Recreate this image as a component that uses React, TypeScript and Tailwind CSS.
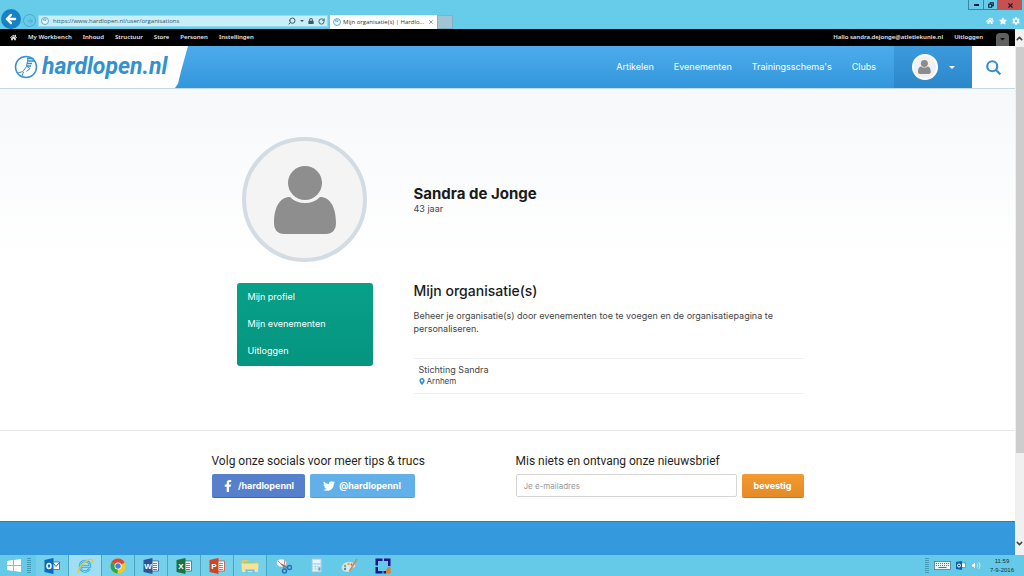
import React from 'react';
import { FaHome, FaStar, FaCog, FaLock, FaFacebookF, FaTwitter, FaMapMarkerAlt } from 'react-icons/fa';
import { ArrowLeft, ArrowRight, ChevronDown, ChevronUp, RotateCw, Search, X } from 'lucide-react';

const adminLinks = ['My Workbench', 'Inhoud', 'Structuur', 'Store', 'Personen', 'Instellingen'];
const navLinks = ['Artikelen', 'Evenementen', "Trainingsschema's", 'Clubs'];
const profileLinks = ['Mijn profiel', 'Mijn evenementen', 'Uitloggen'];

const PageIcon = () => (
  <svg viewBox="0 0 16 16" className="size-2 shrink-0" fill="none" stroke="#3b93c9" strokeWidth="1.5">
    <circle cx="8" cy="8" r="7" fill="#eaf7fd" />
    <path d="M8 2v6l3-3M5 4v3" />
  </svg>
);

const PersonIcon = ({ className }: { className: string }) => (
  <svg viewBox="0 0 62 68" className={className} fill="currentColor">
    <circle cx="31" cy="17" r="17" />
    <path d="M16 31c4 4 9 6 15 6s11-2 15-6c10 0 16 10 16 26 0 7-4 11-10 11H10C4 68 0 64 0 57c0-16 6-26 16-26Z" />
  </svg>
);

const BrowserBar = () => (
  <div className="flex h-[29px] shrink-0 items-stretch justify-between bg-[#67cbea] font-['Open_Sans',sans-serif] text-[6px]">
    <div className="flex flex-1 items-end">
      <button aria-label="Terug" className="ml-px flex size-5 items-center justify-center self-end rounded-full bg-[#1583c3] text-white">
        <ArrowLeft className="size-[14px]" strokeWidth={4} />
      </button>
      <button aria-label="Vooruit" className="mb-[2px] ml-[2px] flex size-[13px] items-center justify-center rounded-full border border-[#49a9cf] text-[#4bacd2]">
        <ArrowRight className="size-2" strokeWidth={3} />
      </button>
      <div className="mb-[2px] ml-[2px] flex h-3 w-[290px] items-center gap-1 border border-[#8fdcf2] bg-[#c9eef8] px-[2px] text-[#3c5a66]">
        <PageIcon />
        <input
          aria-label="Adres"
          defaultValue="https://www.hardlopen.nl/user/organisations"
          className="h-full min-w-0 flex-1 bg-transparent text-[#355764] outline-none"
        />
        <Search className="size-2 -scale-x-100" strokeWidth={3} />
        <svg viewBox="0 0 8 4" className="w-1" fill="currentColor"><path d="M0 0h8L4 4z" /></svg>
        <FaLock className="size-[6px]" />
        <RotateCw className="size-[7px]" strokeWidth={3} />
      </div>
      <div className="ml-[2px] flex h-[14px] w-[107px] items-center gap-[2px] bg-white px-[3px] text-[#333]">
        <PageIcon />
        <span className="flex-1 whitespace-nowrap">Mijn organisatie(s) | Hardlo...</span>
        <button aria-label="Tabblad sluiten"><X className="size-[6px] text-[#777]" strokeWidth={3} /></button>
      </div>
      <button aria-label="Nieuw tabblad" className="h-[14px] w-4 border border-[#7fb3c8] bg-[#9fc5d5]" />
    </div>
    <div className="flex flex-col items-end justify-between">
      <div className="mr-[2px] flex h-[10px] text-[#123]">
        <button aria-label="Minimaliseren" className="flex w-4 items-center justify-center border border-t-0 border-[#3b86a1]">
          <span className="h-[2px] w-[5px] bg-current" />
        </button>
        <button aria-label="Herstellen" className="flex w-[14px] items-center justify-center border border-t-0 border-l-0 border-[#3b86a1]">
          <svg viewBox="0 0 8 8" className="size-[6px]" fill="none" stroke="currentColor" strokeWidth="1.5"><path d="M1 3h4v4H1zM3 3V1h4v4H5" /></svg>
        </button>
        <button aria-label="Sluiten" className="flex w-6 items-center justify-center bg-[#c75050]"><X className="size-[7px]" strokeWidth={4} /></button>
      </div>
      <div className="mr-1 mb-1 flex gap-[5px] text-[#eef9fc]">
        <button aria-label="Startpagina"><FaHome className="size-2" /></button>
        <button aria-label="Favorieten"><FaStar className="size-2" /></button>
        <button aria-label="Extra"><FaCog className="size-2" /></button>
      </div>
    </div>
  </div>
);

const AdminBar = () => (
  <div className="flex h-[17px] shrink-0 items-center justify-between bg-black font-['Noto_Sans',sans-serif] text-[6px] font-semibold text-[#e6e6e6]">
    <div className="flex items-center gap-[11px] pl-[10px]">
      <a href="#" aria-label="Home"><FaHome className="size-[7px]" /></a>
      {adminLinks.map((link) => <a key={link} href="#">{link}</a>)}
    </div>
    <div className="flex h-full items-center gap-[11px] pr-[6px]">
      <a href="#">Hallo sandra.dejonge@atletiekunie.nl</a>
      <a href="#">Uitloggen</a>
      <button aria-label="Snelkoppelingen" className="ml-[2px] flex h-[13px] w-[13px] items-center justify-center self-end rounded-t bg-[#606060]">
        <svg viewBox="0 0 8 4" className="w-[5px]" fill="#111"><path d="M0 0h8L4 4z" /></svg>
      </button>
    </div>
  </div>
);

const SiteHeader = () => (
  <header className="flex h-[43px] shrink-0 items-stretch justify-between border-b border-[#c3d9e8] bg-gradient-to-b from-[#4dabec] to-[#3197db] text-[9px] text-white">
    <a href="#" className="flex w-[188px] items-center gap-1 bg-white pl-[14px] text-[#3391cf] [clip-path:polygon(0_0,100%_0,181px_60%,178px_90%,175px_100%,0_100%)]">
      <svg viewBox="0 0 48 48" className="size-6 shrink-0" fill="none" stroke="currentColor">
        <circle cx="24" cy="24" r="21" strokeWidth="3" />
        <path d="M26 7h13M27 12h14M26 17h10M24 22h10" strokeWidth="3" />
        <path d="M28 8l-3 14 7 5-7 6M25 23l-7 10-10 3M19 34l-3 8" strokeWidth="2" />
      </svg>
      <span className="font-[Roboto,sans-serif] text-[23px] font-bold italic">hardlopen.nl</span>
    </a>
    <div className="flex items-stretch">
      <nav className="flex items-center gap-5 pr-[18px]">
        {navLinks.map((link) => <a key={link} href="#">{link}</a>)}
      </nav>
      <button aria-label="Mijn account" className="flex w-[78px] items-center justify-center gap-[11px] bg-gradient-to-b from-[#3c9bdd] to-[#2b87c9]">
        <span className="flex size-[26px] items-center justify-center rounded-full border-2 border-white bg-[#f1f1f1] text-[#8c8c8c]">
          <PersonIcon className="h-[14px]" />
        </span>
        <svg viewBox="0 0 8 4" className="w-[6px]" fill="white"><path d="M0 0h8L4 4z" /></svg>
      </button>
      <button aria-label="Zoeken" className="flex w-[43px] items-center justify-center bg-white text-[#3a8fc9]">
        <svg viewBox="0 0 24 24" className="size-[15px]" fill="none" stroke="currentColor" strokeWidth="3.5">
          <circle cx="10" cy="10" r="8" />
          <path d="M15 15l8 8" />
        </svg>
      </button>
    </div>
  </header>
);

const Profile = () => (
  <main className="shrink-0 border-b border-[#e6e6e6] bg-gradient-to-b from-[#f6f8fa] via-white to-white pt-12 pb-9">
    <div className="mx-auto grid max-w-[592px] grid-cols-[202px_1fr] gap-y-[21px]">
      <div className="ml-[25px] flex w-[136px] justify-center">
        <div className="flex size-[125px] items-center justify-center rounded-full border-4 border-[#d3dce3] bg-[#f4f4f4] text-[#8e8e8e]">
          <PersonIcon className="h-[68px]" />
        </div>
      </div>
      <div className="flex flex-col justify-center pt-[2px]">
        <h1 className="text-[15px] leading-4 font-bold text-[#1a1a1a]">Sandra de Jonge</h1>
        <p className="text-[9px] leading-[13px] text-[#444]">43 jaar</p>
      </div>

      <nav className="ml-[25px] flex w-[136px] flex-col self-start rounded-[3px] bg-gradient-to-b from-[#08a088] to-[#059580] pb-[2px] text-[9px] text-white">
        {profileLinks.map((link) => (
          <a key={link} href="#" className="px-[11px] leading-[27px]">{link}</a>
        ))}
      </nav>
      <section className="text-[9px] leading-[13px] text-[#444]">
        <h2 className="text-[14px] leading-4 font-medium text-[#1a1a1a]">Mijn organisatie(s)</h2>
        <p className="mt-[10px]">
          Beheer je organisatie(s) door evenementen toe te voegen en de organisatiepagina te personaliseren.
        </p>
        <div className="mt-[23px] border-y border-[#f1f1f1] px-[5px] pt-1 pb-[6px]">
          <a href="#" className="block">Stichting Sandra</a>
          <p className="flex items-center gap-[2px] text-[8px] leading-[11px]">
            <FaMapMarkerAlt className="h-[7px] w-[6px] text-[#2f8fd0]" />
            Arnhem
          </p>
        </div>
      </section>
    </div>
  </main>
);

const Footer = () => (
  <footer className="flex flex-1 flex-col bg-gradient-to-b from-[#3b9fe3] to-[#3498dd]">
    <div className="border-b border-[#2f7db5] bg-white pt-[22px] pb-[23px]">
      <div className="mx-auto grid max-w-[592px] grid-cols-2 gap-4">
        <section>
          <h3 className="font-[Roboto,sans-serif] text-[12px] leading-4 text-[#1f1f1f]">Volg onze socials voor meer tips &amp; trucs</h3>
          <div className="mt-[5px] flex gap-[5px] text-[9px] font-bold text-white">
            <a href="#" className="flex h-6 w-[93px] items-center justify-center gap-1 rounded-[2px] border-b border-[#4565aa] bg-[#5680cb]">
              <FaFacebookF className="size-3" />/hardlopennl
            </a>
            <a href="#" className="flex h-6 w-[105px] items-center justify-center gap-1 rounded-[2px] border-b border-[#559dd2] bg-[#62b0ea]">
              <FaTwitter className="size-3" />@hardlopennl
            </a>
          </div>
        </section>
        <form onSubmit={(e) => e.preventDefault()}>
          <label htmlFor="email" className="block font-[Roboto,sans-serif] text-[12px] leading-4 text-[#1f1f1f]">
            Mis niets en ontvang onze nieuwsbrief
          </label>
          <div className="mt-[5px] flex gap-[5px] text-[9px]">
            <input
              id="email"
              type="email"
              placeholder="Je e-mailadres"
              className="h-[23px] min-w-0 flex-1 rounded-[2px] border border-[#d5d5d5] bg-white px-[7px] text-[8px] outline-none placeholder:text-[#999]"
            />
            <button type="submit" className="h-6 w-[62px] rounded-[2px] border-b border-[#c97a20] bg-gradient-to-b from-[#f39a30] to-[#e58a27] font-bold text-white">
              bevestig
            </button>
          </div>
        </form>
      </div>
    </div>
  </footer>
);

const OfficeIcon = ({ letter, color }: { letter: string; color: string }) => (
  <svg viewBox="0 0 32 32" className="size-4">
    <rect x="15" y="6" width="16" height="20" fill="#fff" stroke={color} strokeWidth="1.5" />
    <path d="M20 11h8M20 15h8M20 19h8M20 23h8" stroke={color} strokeWidth="1.5" />
    <path d="M1 4l18-4v32L1 28z" fill={color} />
    <text x="10" y="22" textAnchor="middle" fontFamily="Liberation Sans, sans-serif" fontSize="16" fontWeight="bold" fill="#fff">{letter}</text>
  </svg>
);

const apps = [
  {
    name: 'Outlook',
    open: true,
    icon: (
      <svg viewBox="0 0 32 32" className="size-4">
        <path d="M17 8h14v15H17z" fill="#fff" stroke="#0a6cb8" strokeWidth="1.5" />
        <path d="M18 10l6 7 6-7" fill="none" stroke="#0a6cb8" strokeWidth="2" />
        <path d="M1 4l18-4v32L1 28z" fill="#0a6cb8" />
        <ellipse cx="10" cy="16" rx="4" ry="5" fill="none" stroke="#fff" strokeWidth="3" />
      </svg>
    ),
  },
  {
    name: 'Internet Explorer',
    open: true,
    active: true,
    icon: (
      <svg viewBox="0 0 32 32" className="size-4" fill="none">
        <path d="M25 21c-2 4-5 6-9 6-6 0-10-5-10-11S10 6 16 6s10 4 10 11H9" stroke="#35a7dc" strokeWidth="5" />
        <path d="M25 21c-2 4-5 6-9 6-6 0-10-5-10-11S10 6 16 6s10 4 10 11H9" stroke="#a3e3f8" strokeWidth="1.5" />
        <path d="M4 29C-3 24 20 0 29 3c3 1 2 5 0 8" stroke="#e9c33d" strokeWidth="2.5" />
      </svg>
    ),
  },
  {
    name: 'Chrome',
    open: true,
    icon: (
      <svg viewBox="0 0 32 32" className="size-4">
        <circle cx="16" cy="16" r="15" fill="#fbc914" />
        <path d="M16 16L3 8.500a15 15 0 0 1 26 0z" fill="#e04434" />
        <path d="M16 16L3 8.500A15 15 0 0 0 15 31z" fill="#2da44f" />
        <path d="M14 9h15.300L27 11H16z" fill="#e04434" />
        <circle cx="16" cy="16" r="7" fill="#fff" />
        <circle cx="16" cy="16" r="5.500" fill="#3f83e8" />
      </svg>
    ),
  },
  { name: 'Word', open: true, icon: <OfficeIcon letter="W" color="#2a5699" /> },
  { name: 'Excel', open: true, icon: <OfficeIcon letter="X" color="#1f7246" /> },
  { name: 'PowerPoint', open: true, icon: <OfficeIcon letter="P" color="#d04424" /> },
  {
    name: 'Verkenner',
    open: true,
    icon: (
      <svg viewBox="0 0 36 32" className="h-4">
        <path d="M2 4h12l2 4h16v20H2z" fill="#e6c766" />
        <path d="M5 7h24v8H5z" fill="#8fce9b" />
        <path d="M1 11h34l-1 17H2z" fill="#f6e39a" />
        <path d="M9 30v-7h18v7h-4v-4H13v4z" fill="#78b9dc" />
      </svg>
    ),
  },
  {
    name: 'Knipprogramma',
    icon: (
      <svg viewBox="0 0 32 32" className="size-4" fill="none">
        <ellipse cx="11" cy="10" rx="10" ry="8" fill="#f4f4f8" stroke="#aaa4b8" />
        <path d="M4 6l17 16M18 4l-3 17" stroke="#c0504d" strokeWidth="1.5" />
        <path d="M10 12l14 8" stroke="#777" strokeWidth="2.500" />
        <circle cx="17" cy="26" r="4" stroke="#2673b8" strokeWidth="3" />
        <circle cx="27" cy="19" r="4" stroke="#2673b8" strokeWidth="3" />
      </svg>
    ),
  },
  {
    name: 'Rekenmachine',
    icon: (
      <svg viewBox="0 0 24 32" className="h-[15px]">
        <rect x="1" y="1" width="22" height="30" rx="2" fill="#b5d9e9" stroke="#8cb5c9" />
        <path d="M4 4h16v7H4z" fill="#e8f6fb" />
        <path d="M4 16h16M4 21h16M4 26h16" stroke="#f5fbfd" strokeWidth="3" strokeDasharray="4 2" />
        <path d="M16 20h4v7h-4z" fill="#639fc4" />
      </svg>
    ),
  },
  {
    name: 'Paint',
    icon: (
      <svg viewBox="0 0 34 32" className="h-4">
        <path d="M3 14C8 6 24 5 28 13c3 7-5 6-7 9-2 4-4 7-11 6C2 27-1 20 3 14z" fill="#dce9ed" stroke="#9cb6bf" />
        <circle cx="8" cy="16" r="2.500" fill="#7bb64b" />
        <circle cx="15" cy="12" r="2.500" fill="#e4a63c" />
        <circle cx="8" cy="22" r="2.500" fill="#4b8dca" />
        <circle cx="21" cy="13" r="2" fill="#d25345" />
        <path d="M32 2L17 26" stroke="#c78b5c" strokeWidth="3" />
      </svg>
    ),
  },
  {
    name: 'Schermkader',
    icon: (
      <svg viewBox="0 0 32 32" className="size-4">
        <path d="M1 1h14v5H6v9H1zM18 1h13v15h-5V6h-8zM1 18h5v8h9v5H1zM17 26h5v5h-5z" fill="#22148a" />
        <path d="M26 18h5v13h-9v-6z" fill="#ee7722" />
      </svg>
    ),
  },
];

const Grip = () => (
  <span className="h-4 w-1 bg-[repeating-linear-gradient(#4699b5_0_1px,transparent_1px_2px)]" />
);

const Taskbar = () => (
  <div className="flex h-[21px] shrink-0 items-center justify-between bg-[#65c9e8] font-['Liberation_Sans',sans-serif] text-[6px]">
    <div className="flex h-full items-center">
      <button aria-label="Start" className="flex w-[27px] justify-center">
        <svg viewBox="0 0 28 26" className="w-[14px]" fill="#fff"><path d="M0 4l12-2v10H0zM14 2l14-2v12H14zM0 14h12v10L0 22zM14 14h14v12l-14-2z" /></svg>
      </button>
      <Grip />
      <div className="ml-[5px] flex h-full">
        {apps.map((app) => (
          <button
            key={app.name}
            aria-label={app.name}
            className={`flex w-[33px] items-center justify-center ${app.open ? 'border-r border-[#4ba6c3] bg-[#74d0eb]' : ''} ${app.active ? 'bg-[#a0dff1]' : ''}`}
          >
            {app.icon}
          </button>
        ))}
      </div>
    </div>
    <div className="flex items-center gap-[5px] pr-[10px]">
      <Grip />
      <svg viewBox="0 0 34 18" className="w-[17px]">
        <rect x="1" y="1" width="32" height="16" fill="#e8f6fa" stroke="#55727c" strokeWidth="1.500" />
        <path d="M4 5h26M4 9h26" stroke="#55727c" strokeWidth="2" strokeDasharray="2 2" />
        <path d="M9 13h16" stroke="#55727c" strokeWidth="2" />
      </svg>
      <svg viewBox="0 0 20 18" className="w-[10px]">
        <path d="M10 4h9v9h-9z" fill="#fff" stroke="#0a6cb8" />
        <path d="M0 2l12-2v18L0 16z" fill="#0a5fae" />
        <circle cx="6" cy="9" r="3" fill="none" stroke="#fff" strokeWidth="2" />
      </svg>
      <svg viewBox="0 0 20 18" className="w-[10px]" fill="none">
        <path d="M1 6h3l5-5v16l-5-5H1z" fill="#f1f8fa" stroke="#7797a2" />
        <path d="M12 5c2 2 2 6 0 8M15 2c4 4 4 10 0 14" stroke="#e4f5fa" strokeWidth="1.500" />
      </svg>
      <div className="pl-1 text-center leading-[9px] text-[#15323c]">
        <p>11:59</p>
        <p>7-9-2016</p>
      </div>
    </div>
  </div>
);

const App: React.FC = () => {
  return (
    <div className="flex h-screen flex-col overflow-hidden bg-white font-[Inter,sans-serif]">
      <BrowserBar />
      <div className="flex min-h-0 flex-1">
        <div className="flex min-w-0 flex-1 flex-col overflow-hidden">
          <AdminBar />
          <SiteHeader />
          <Profile />
          <Footer />
        </div>
        {/* Scrollbar */}
        <div className="flex w-[9px] flex-col items-center bg-[#f0f0f0] text-[#444]">
          <button aria-label="Omhoog" className="flex h-[18px] items-center"><ChevronUp className="size-[9px]" strokeWidth={4} /></button>
          <div className="w-2 grow-[26] bg-[#cdcdcd]" />
          <div className="grow-[5]" />
          <button aria-label="Omlaag" className="flex h-6 items-center"><ChevronDown className="size-[9px]" strokeWidth={4} /></button>
        </div>
      </div>
      <Taskbar />
    </div>
  );
};

export default App;
